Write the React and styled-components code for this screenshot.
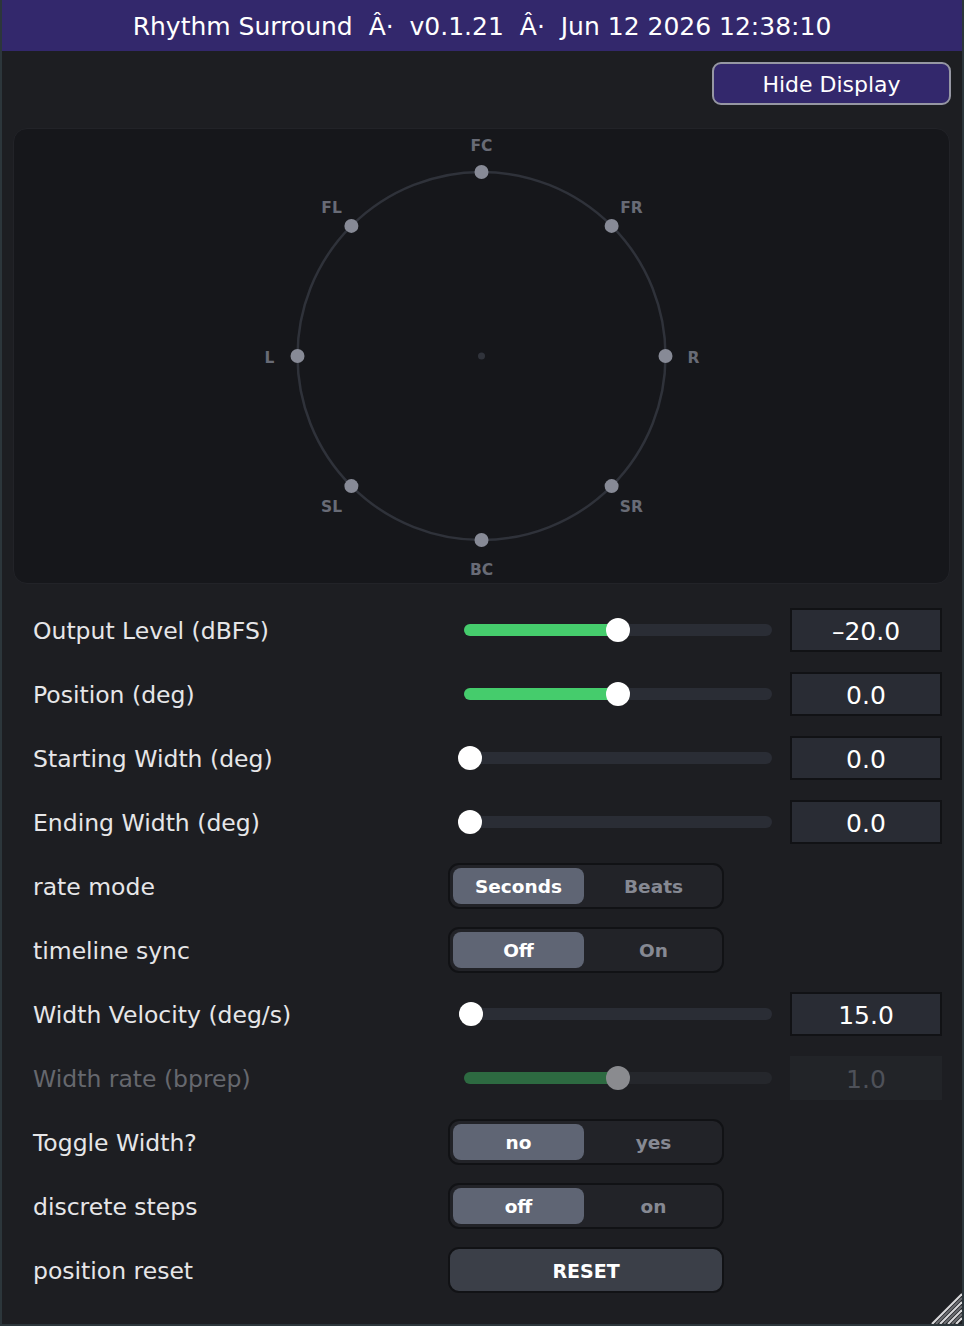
import React from 'react';
import styled, { createGlobalStyle } from 'styled-components';

const GlobalStyle = createGlobalStyle`
  html, body {
    margin: 0;
    padding: 0;
    background: #1d1e22;
  }
  * {
    box-sizing: border-box;
  }
`;

const Window = styled.div`
  position: relative;
  width: 964px;
  height: 1326px;
  background: #1d1e22;
  border: 2px solid #2c363b;
  border-top: none;
  font-family: 'DejaVu Sans', 'Noto Sans', sans-serif;
  color: #e4e4e6;
  overflow: hidden;
`;

const TitleBar = styled.div`
  height: 51px;
  padding-top: 2px;
  background: #33286c;
  display: flex;
  align-items: center;
  justify-content: center;
  font-size: 25px;
  color: #ffffff;
  white-space: pre;
`;

const Toolbar = styled.div`
  display: flex;
  justify-content: flex-end;
  padding: 11px 11px 0 0;
`;

const ToggleDisplayButton = styled.button`
  width: 239px;
  height: 43px;
  padding: 2px 0 0;
  border-radius: 9px;
  border: 2px solid #9697a3;
  background: #33286c;
  color: #ffffff;
  font-family: inherit;
  font-size: 22px;
`;

const SpeakerPanel = styled.div`
  margin: 23px 12px 0 11px;
  height: 456px;
  background: #16171b;
  border: 1px solid #222328;
  border-radius: 14px;
  display: flex;
  align-items: center;
  justify-content: center;
`;

const Controls = styled.div`
  margin-top: 14px;
  display: flex;
  flex-direction: column;
`;

const Row = styled.div`
  height: 64px;
  display: grid;
  grid-template-columns: 403px 330px 152px;
  column-gap: 12px;
  align-items: center;
  padding: 0 20px 0 31px;
`;

const Label = styled.div`
  padding-top: 2px;
  font-size: 23.5px;
  color: ${p => (p.disabled ? '#66686e' : '#e6e6e8')};
`;

const SliderTrack = styled.div`
  position: relative;
  height: 12px;
  margin: 0 6px 0 16px;
  border-radius: 6px;
  background: ${p => (p.disabled ? '#25272c' : '#2a2d35')};
`;

const SliderFill = styled.div`
  height: 100%;
  border-radius: 6px;
  background: ${p => (p.disabled ? '#2d6a41' : '#45cc6c')};
`;

const SliderThumb = styled.div`
  position: absolute;
  top: 50%;
  width: 24px;
  height: 24px;
  margin: -12px 0 0 -12px;
  border-radius: 50%;
  background: ${p => (p.disabled ? '#8a8b8f' : '#ffffff')};
`;

const ValueBox = styled.div`
  height: 44px;
  padding-top: 2px;
  display: flex;
  align-items: center;
  justify-content: center;
  background: ${p => (p.disabled ? '#222428' : '#292c34')};
  border: 2px solid ${p => (p.disabled ? '#222428' : '#111215')};
  font-size: 25px;
  color: ${p => (p.disabled ? '#4e5159' : '#ffffff')};
`;

const Segmented = styled.div`
  width: 276px;
  height: 46px;
  display: grid;
  grid-template-columns: 1fr 1fr;
  gap: 4px;
  padding: 3px;
  border: 2px solid #111215;
  border-radius: 11px;
  background: #222328;
`;

const Segment = styled.div`
  display: flex;
  align-items: center;
  justify-content: center;
  padding-top: 1px;
  border-radius: 8px;
  font-size: 18.5px;
  font-weight: 700;
  background: ${p => (p.active ? '#5f6574' : 'transparent')};
  color: ${p => (p.active ? '#ffffff' : '#868993')};
`;

const ActionButton = styled.button`
  width: 276px;
  height: 46px;
  padding: 1px 0 0;
  border: 2px solid #111215;
  border-radius: 11px;
  background: #3b3f48;
  color: #ffffff;
  font-family: inherit;
  font-size: 19px;
  font-weight: 700;
`;

const Grip = styled.svg`
  position: absolute;
  right: 0;
  bottom: 0;
`;

const SPEAKERS = [
  { name: 'FC', angle: 0 },
  { name: 'FR', angle: 45 },
  { name: 'R', angle: 90 },
  { name: 'SR', angle: 135 },
  { name: 'BC', angle: 180 },
  { name: 'SL', angle: 225 },
  { name: 'L', angle: 270 },
  { name: 'FL', angle: 315 },
];

const CONTROLS = [
  { type: 'slider', label: 'Output Level (dBFS)', value: 0.5, text: '\u201320.0' },
  { type: 'slider', label: 'Position (deg)', value: 0.5, text: '0.0' },
  { type: 'slider', label: 'Starting Width (deg)', value: 0, text: '0.0', noFill: true },
  { type: 'slider', label: 'Ending Width (deg)', value: 0, text: '0.0', noFill: true },
  { type: 'choice', label: 'rate mode', options: ['Seconds', 'Beats'] },
  { type: 'choice', label: 'timeline sync', options: ['Off', 'On'] },
  { type: 'slider', label: 'Width Velocity (deg/s)', value: 0.004, text: '15.0', noFill: true },
  { type: 'slider', label: 'Width rate (bprep)', value: 0.5, text: '1.0', disabled: true },
  { type: 'choice', label: 'Toggle Width?', options: ['no', 'yes'] },
  { type: 'choice', label: 'discrete steps', options: ['off', 'on'] },
  { type: 'button', label: 'position reset', text: 'RESET' },
];

function SpeakerMap() {
  const w = 935;
  const h = 454;
  const cx = w / 2;
  const cy = h / 2;
  const r = 184;
  const lr = 212;

  return (
    <svg width={w} height={h} viewBox={`0 0 ${w} ${h}`}>
      <circle cx={cx} cy={cy} r={r} fill="none" stroke="#2f323a" strokeWidth="2.5" />
      <circle cx={cx} cy={cy} r="3.5" fill="#30333b" />
      {SPEAKERS.map(s => {
        const a = (s.angle * Math.PI) / 180;
        return (
          <g key={s.name}>
            <circle cx={cx + r * Math.sin(a)} cy={cy - r * Math.cos(a)} r="7" fill="#878a96" />
            <text
              x={cx + lr * Math.sin(a)}
              y={cy - lr * Math.cos(a) + 1.5}
              textAnchor="middle"
              dominantBaseline="central"
              fill="#686b76"
              fontSize="15.5"
              fontWeight="700"
              fontFamily="'DejaVu Sans', 'Noto Sans', sans-serif"
            >
              {s.name}
            </text>
          </g>
        );
      })}
    </svg>
  );
}

function Slider({ value, disabled, noFill }) {
  const pos = `calc(6px + (100% - 12px) * ${value})`;
  return (
    <SliderTrack disabled={disabled}>
      {!noFill && <SliderFill disabled={disabled} style={{ width: pos }} />}
      <SliderThumb disabled={disabled} style={{ left: pos }} />
    </SliderTrack>
  );
}

function ControlRow({ control }) {
  return (
    <Row>
      <Label disabled={control.disabled}>{control.label}</Label>
      {control.type === 'slider' && (
        <Slider value={control.value} disabled={control.disabled} noFill={control.noFill} />
      )}
      {control.type === 'choice' && (
        <Segmented>
          {control.options.map((opt, i) => (
            <Segment key={opt} active={i === 0}>
              {opt}
            </Segment>
          ))}
        </Segmented>
      )}
      {control.type === 'button' && <ActionButton>{control.text}</ActionButton>}
      {control.type === 'slider' ? (
        <ValueBox disabled={control.disabled}>{control.text}</ValueBox>
      ) : (
        <div />
      )}
    </Row>
  );
}

export default function App() {
  return (
    <Window>
      <GlobalStyle />
      <TitleBar>{'Rhythm Surround  \u00C2\u00B7  v0.1.21  \u00C2\u00B7  Jun 12 2026 12:38:10'}</TitleBar>
      <Toolbar>
        <ToggleDisplayButton>Hide Display</ToggleDisplayButton>
      </Toolbar>
      <SpeakerPanel>
        <SpeakerMap />
      </SpeakerPanel>
      <Controls>
        {CONTROLS.map(c => (
          <ControlRow key={c.label} control={c} />
        ))}
      </Controls>
      <Grip width="36" height="36" viewBox="0 0 36 36">
        {[0, 8, 16, 24].map(o => (
          <line key={o} x1={6 + o} y1="36" x2="36" y2={6 + o} stroke="#d8d8da" strokeWidth="2.2" />
        ))}
        {[4, 12, 20].map(o => (
          <line key={o} x1={6 + o} y1="36" x2="36" y2={6 + o} stroke="#6c6e72" strokeWidth="2" />
        ))}
      </Grip>
    </Window>
  );
}
